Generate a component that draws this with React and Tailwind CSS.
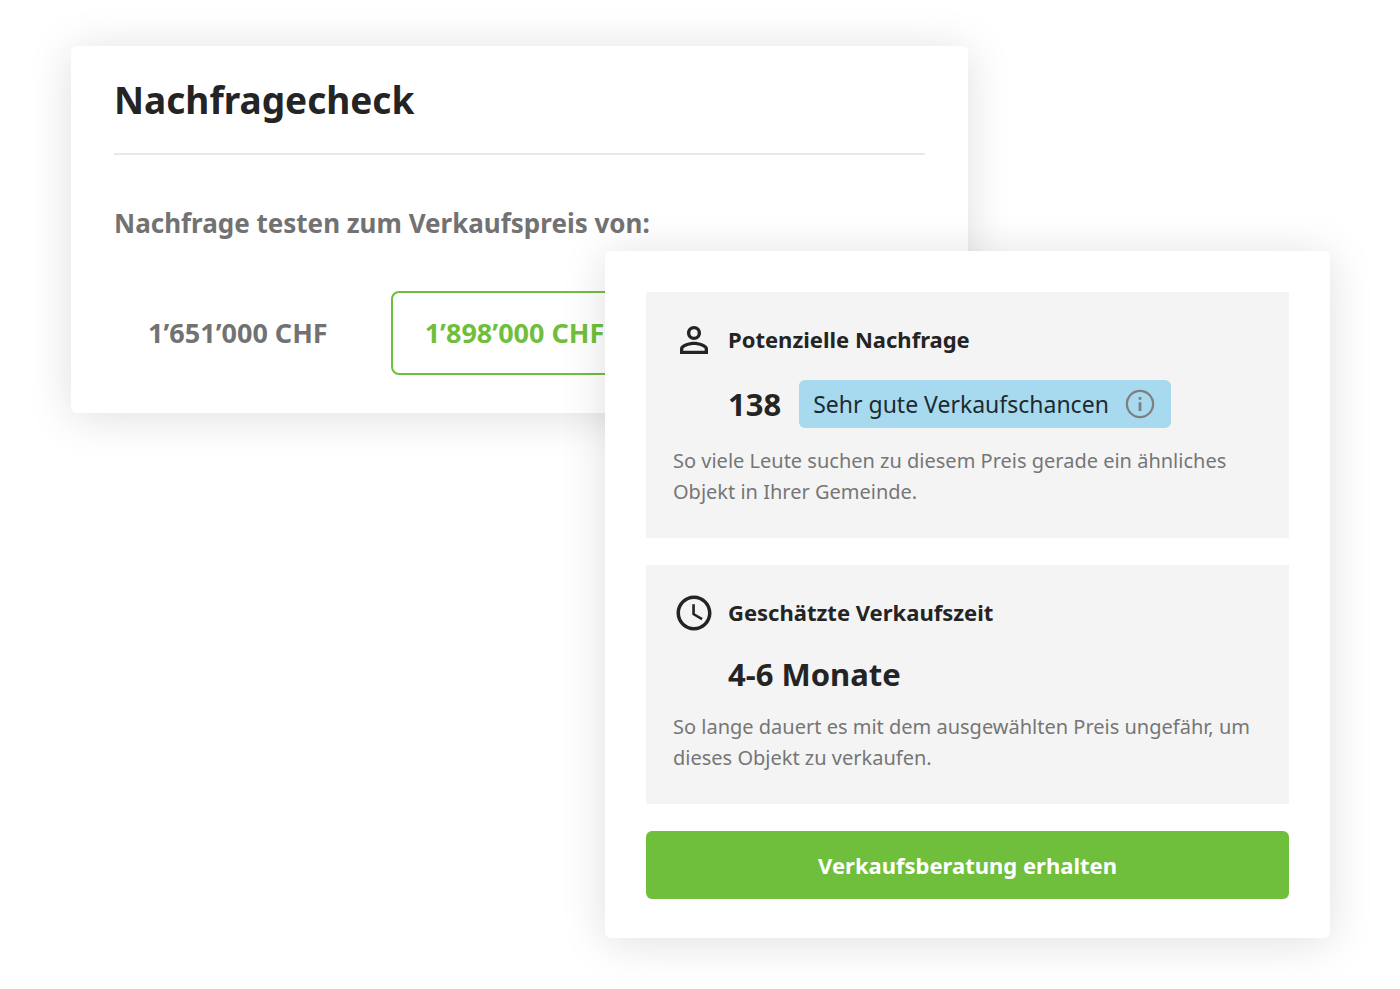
import { useState } from "react";

const CARD =
  "rounded-md bg-white shadow-[0_4px_46px_rgba(0,0,0,0.13)]";

function PersonIcon() {
  return (
    <svg viewBox="0 0 24 24" className="size-[42px] shrink-0" fill="currentColor" aria-hidden="true">
      <path d="M12 5.9a2.1 2.1 0 1 1 0 4.2 2.1 2.1 0 0 1 0-4.2m0 9c2.97 0 6.1 1.46 6.1 2.1v1.1H5.9V17c0-.64 3.13-2.1 6.1-2.1M12 4C9.79 4 8 5.79 8 8s1.79 4 4 4 4-1.79 4-4-1.79-4-4-4m0 9c-2.67 0-8 1.34-8 4v3h16v-3c0-2.66-5.33-4-8-4" />
    </svg>
  );
}

function ClockIcon() {
  return (
    <svg viewBox="0 0 24 24" className="size-[42px] shrink-0" fill="currentColor" aria-hidden="true">
      <path d="M11.99 2C6.47 2 2 6.48 2 12s4.47 10 9.99 10C17.52 22 22 17.52 22 12S17.52 2 11.99 2M12 20c-4.42 0-8-3.58-8-8s3.58-8 8-8 8 3.58 8 8-3.58 8-8 8m.5-13H11v6l5.25 3.15.75-1.23-4.5-2.67z" />
    </svg>
  );
}

function InfoIcon() {
  return (
    <svg viewBox="0 0 30 30" className="size-[30px]" fill="none" aria-hidden="true">
      <circle cx="15" cy="15" r="13.1" stroke="currentColor" strokeWidth="2.3" />
      <path d="M15 13.2v8.8M15 8v2.8" stroke="currentColor" strokeWidth="2.8" />
    </svg>
  );
}

function PriceOption({ label, selected, onSelect }) {
  return (
    <button
      type="button"
      aria-pressed={selected}
      onClick={onSelect}
      className={`h-[84px] rounded-lg border-2 px-8 text-[27px] leading-9 font-bold whitespace-nowrap ${
        selected ? "border-[#70bf3c] text-[#70bf3c]" : "border-transparent text-[#727272]"
      }`}
    >
      {label}
    </button>
  );
}

function Metric({ icon, title, value, badge, children }) {
  return (
    <section className="bg-[#f4f4f4] px-[27px] pt-[27px] pb-[31px]">
      <div className="flex items-start gap-[13px]">
        {icon}
        <h2 className="text-[22px] leading-10 font-bold">{title}</h2>
      </div>
      <div className="mt-[19px] flex min-h-[41px] items-center gap-[18px] pl-[55px]">
        <p className="text-[31px] leading-10 font-bold">{value}</p>
        {badge}
      </div>
      <p className="mt-[17px] text-[20px] leading-[31px] text-[#767676]">{children}</p>
    </section>
  );
}

const PRICES = ["1’651’000 CHF", "1’898’000 CHF"];

export default function App() {
  const [price, setPrice] = useState(PRICES[1]);

  return (
    <main className="grid min-h-screen grid-cols-[534fr_363fr_362fr] items-start bg-white pt-[46px] pr-[70px] pb-[51px] pl-[71px] font-['Noto_Sans',sans-serif] text-[#242424]">
      <section className={`${CARD} col-span-2 col-start-1 row-start-1 px-[43px] pt-7 pb-[38px]`}>
        <h1 className="border-b-2 border-[#e8e8e8] pb-[27px] text-[37px] leading-[52px] font-bold">
          Nachfragecheck
        </h1>
        <p id="price-label" className="mt-[50px] text-[26px] leading-9 font-bold text-[#727272]">
          Nachfrage testen zum Verkaufspreis von:
        </p>
        <div role="group" aria-labelledby="price-label" className="mt-[50px] flex gap-[29px]">
          {PRICES.map((p) => (
            <PriceOption key={p} label={p} selected={p === price} onSelect={() => setPrice(p)} />
          ))}
        </div>
      </section>

      <section className={`${CARD} col-span-2 col-start-2 row-start-1 mt-[205px] flex flex-col gap-[27px] px-[41px] pt-[41px] pb-[39px]`}>
        <Metric
          icon={<PersonIcon />}
          title="Potenzielle Nachfrage"
          value="138"
          badge={
            <div className="flex h-12 items-center gap-4 rounded-md bg-[#a8daef] pr-4 pl-[14px] text-[23px] leading-8 whitespace-nowrap text-[#1c2a30]">
              Sehr gute Verkaufschancen
              <button type="button" aria-label="Mehr Informationen" className="text-[#7f7f7f]">
                <InfoIcon />
              </button>
            </div>
          }
        >
          So viele Leute suchen zu diesem Preis gerade ein ähnliches Objekt in Ihrer Gemeinde.
        </Metric>
        <Metric icon={<ClockIcon />} title="Geschätzte Verkaufszeit" value="4-6 Monate">
          So lange dauert es mit dem ausgewählten Preis ungefähr, um dieses Objekt zu verkaufen.
        </Metric>
        <button type="button" className="h-[68px] rounded-md bg-[#70bf3c] text-[22px] leading-8 font-bold text-white">
          Verkaufsberatung erhalten
        </button>
      </section>
    </main>
  );
}
